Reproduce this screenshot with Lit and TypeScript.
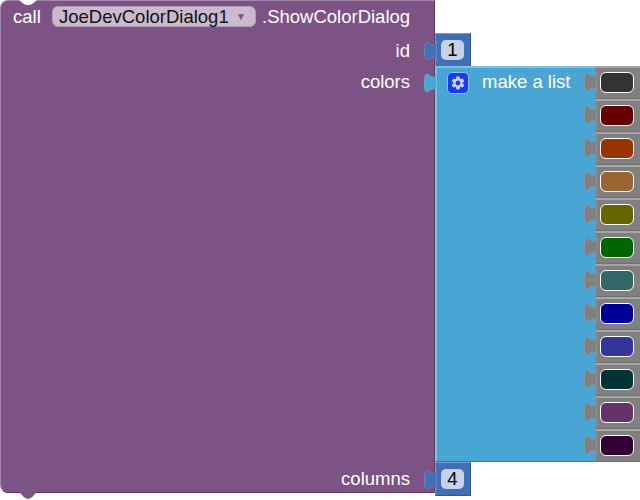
import { LitElement, html, css, svg } from "lit";
import { customElement } from "lit/decorators.js";

const SWATCHES = ["#333333","#660000","#993300","#996633","#666600","#006600","#336666","#000099","#333399","#003333","#663366","#330033"];

const tab = (cls: string) => html`<svg class="tab ${cls}" viewBox="-0.5 -0.5 13 20" width="13" height="20">${svg`<path d="M12 0 C11 5 7 4 5 2 C3 0 1 0 .5 3 C-.2 7 -.2 12 .5 16 C1 19 3 19 5 17 C7 15 11 14 12 19 Z"/>`}</svg>`;

const gear = html`<svg class="gear" viewBox="0 0 24 24" width="16" height="16">${svg`<path d="M19.14 12.94c.04-.3.06-.61.06-.94 0-.32-.02-.64-.07-.94l2.03-1.58a.49.49 0 0 0 .12-.61l-1.92-3.32a.488.488 0 0 0-.59-.22l-2.39.96c-.5-.38-1.03-.7-1.62-.94l-.36-2.54a.484.484 0 0 0-.48-.41h-3.84c-.24 0-.43.17-.47.41l-.36 2.54c-.59.24-1.13.57-1.62.94l-2.39-.96c-.22-.08-.47 0-.59.22L2.74 8.87c-.12.21-.08.47.12.61l2.03 1.58c-.05.3-.09.63-.09.94s.02.64.07.94l-2.03 1.58a.49.49 0 0 0-.12.61l1.92 3.32c.12.22.37.29.59.22l2.39-.96c.5.38 1.03.7 1.62.94l.36 2.54c.05.24.24.41.48.41h3.84c.24 0 .44-.17.47-.41l.36-2.54c.59-.24 1.13-.56 1.62-.94l2.39.96c.22.08.47 0 .59-.22l1.92-3.32c.12-.22.07-.47-.12-.61l-2.01-1.58zM12 15.6c-1.98 0-3.6-1.62-3.6-3.6s1.62-3.6 3.6-3.6 3.6 1.62 3.6 3.6-1.62 3.6-3.6 3.6z"/>`}</svg>`;

@customElement("app-root")
export class AppRoot extends LitElement {
  static styles = css`
    :host { display: block; width: 640px; height: 500px; overflow: hidden; background: #fff; font-family: "Liberation Sans", Arial, sans-serif; font-size: 18.5px; color: #fff; }
    .scene { display: flex; align-items: flex-start; width: 640px; height: 500px; overflow: hidden; }

    .call { position: relative; box-sizing: border-box; flex: none; width: 435px; height: 493px; background: #7d5385; border-top: 1px solid #a487aa; border-left: 1px solid #a487aa; border-right: 1px solid #5f3f66; border-bottom: 1px solid #5f3f66; border-radius: 8px 0 0 8px; display: flex; flex-direction: column; }
    .notch-top { position: absolute; left: 17px; top: -1px; width: 20px; height: 6px; }
    .notch-bottom { position: absolute; left: 17px; top: 491px; width: 20px; height: 8px; }
    .head { display: flex; align-items: center; height: 21px; margin-top: 5px; padding-left: 12px; }
    .head-label { width: 39px; }
    .dropdown { box-sizing: border-box; display: flex; align-items: center; justify-content: space-between; width: 204px; height: 21px; padding: 0 9px 0 6px; background: #cbb9ce; border: 1px solid #b09ab5; border-radius: 6px; color: #111; }
    .caret { color: #7d5385; font-size: 10px; }
    .method { margin-left: 6px; }
    .rows { flex: 1; display: flex; flex-direction: column; justify-content: space-between; padding-top: 14px; padding-bottom: 4px; }
    .row { display: flex; justify-content: flex-end; padding-right: 24px; height: 19px; line-height: 19px; }
    .row-group { display: flex; flex-direction: column; gap: 12px; }

    .right { flex: none; display: flex; flex-direction: column; margin-top: 33px; }
    .block { position: relative; box-sizing: border-box; }
    .tab { position: absolute; left: -12px; top: 7px; }
    .tab path { stroke-width: 0.6; }

    .num { box-sizing: border-box; width: 36px; height: 34px; background: #406fb5; border-top: 1px solid #7498cc; border-left: 1px solid #7498cc; border-right: 1px solid #2f5690; border-bottom: 1px solid #2f5690; padding: 6px 0 0 5px; }
    .tab-num path { fill: #406fb5; stroke: #6f95cb; }
    .field { width: 23px; height: 20px; background: #c5d2e8; border-radius: 5px; color: #000; text-align: center; line-height: 20px; }

    .list { display: flex; width: 205px; height: 396px; margin-top: -1px; }
    .list-main { position: relative; box-sizing: border-box; width: 160px; height: 396px; background: #49a6d4; border-top: 2px solid #80c1e1; border-left: 2px solid #80c1e1; border-bottom: 1px solid #347a9e; display: flex; align-items: flex-start; padding: 4px 0 0 10px; }
    .tab-list { left: -13px; top: 5px; }
    .tab-list path { fill: #49a6d4; stroke: #80c1e1; }
    .icon { box-sizing: border-box; display: flex; align-items: center; justify-content: center; width: 22px; height: 22px; background: #1a3cf0; border: 1px solid #8fc0e8; border-radius: 5px; }
    .gear path { fill: #c9d6f5; }
    .list-label { margin: 0 0 0 13px; line-height: 19px; }
    .items { display: flex; flex-direction: column; }
    .item { box-sizing: border-box; width: 45px; height: 33px; background: #808080; border-top: 2px solid #a6a6a6; border-bottom: 1px solid #707070; border-left: 1px solid #8c8c8c; padding: 4px 0 0 4px; }
    .tab-item { left: -12px; top: 4px; }
    .tab-item path { fill: #808080; stroke: #9a9a9a; }
    .swatch { box-sizing: border-box; width: 34px; height: 21px; border: 1.5px solid #fff; border-radius: 6px; }
  `;

  render() {
    return html`<div class="scene">
      <div class="call">
        <svg class="notch-top" viewBox="0 0 20 6">${svg`<path d="M0,0 L1,0 C4,3 7,5 10,5 C13,5 16,3 19,0 L20,0 Z" fill="#fff"/>`}</svg>
        <svg class="notch-bottom" viewBox="0 0 20 8">${svg`<path d="M0,0 L1,0 C4,3 7,7 10,7 C13,7 16,3 19,0 L20,0 Z" fill="#7d5385"/>`}</svg>
        <div class="head">
          <span class="head-label">call</span>
          <div class="dropdown"><span>JoeDevColorDialog1</span><span class="caret">▼</span></div>
          <span class="method">.ShowColorDialog</span>
        </div>
        <div class="rows">
          <div class="row-group">
            <div class="row">id</div>
            <div class="row">colors</div>
          </div>
          <div class="row">columns</div>
        </div>
      </div>
      <div class="right">
        <div class="block num">${tab("tab-num")}<div class="field">1</div></div>
        <div class="block list">
          <div class="list-main">
            ${tab("tab-list")}
            <div class="icon">${gear}</div>
            <span class="list-label">make a list</span>
          </div>
          <div class="items">
            ${SWATCHES.map((c) => html`<div class="block item">${tab("tab-item")}<div class="swatch" style="background:${c}"></div></div>`)}
          </div>
        </div>
        <div class="block num">${tab("tab-num")}<div class="field">4</div></div>
      </div>
    </div>`;
  }
}
